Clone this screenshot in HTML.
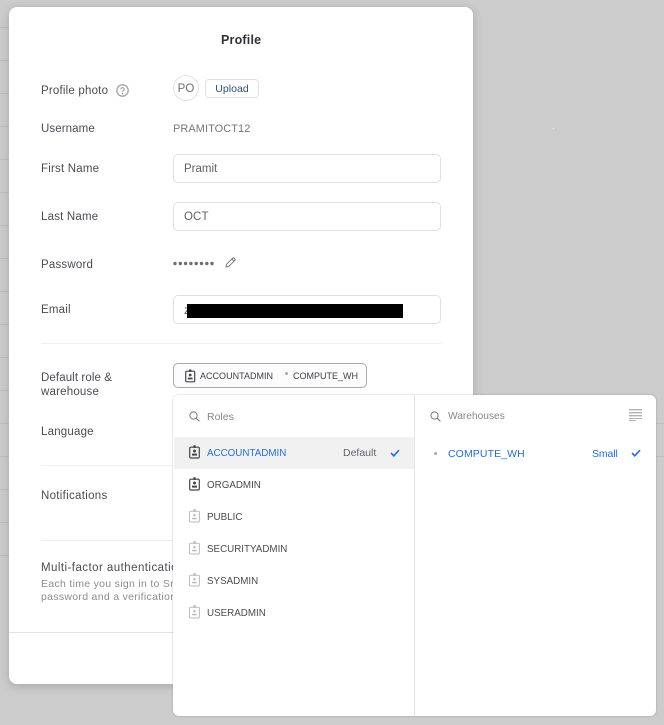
<!DOCTYPE html>
<html><head><meta charset="utf-8"><style>
html,body{margin:0;padding:0}
body{width:664px;height:725px;overflow:hidden;background:#cccccc;position:relative;font-family:"Liberation Sans",sans-serif;font-size:11.5px;color:#4a4c52}
.a{position:absolute;white-space:nowrap;line-height:14px;margin-top:1px}
.l{letter-spacing:.2px}
.ln{position:absolute;height:1px;background:#bdbdbd}
.modal{position:absolute;left:9px;top:7px;width:464px;height:677px;background:#fff;border-radius:8px;box-shadow:0 2px 10px rgba(0,0,0,.18)}
.input{position:absolute;left:173px;width:266px;height:27px;border:1px solid #dfe0e2;border-radius:5px;background:#fff}
.hr{position:absolute;height:1px;background:#efeff0}
.pop{position:absolute;left:173px;top:395px;width:483px;height:321px;background:#fff;border-radius:6px;box-shadow:0 0 2px rgba(0,0,0,.22)}
.r{font-size:9.8px;letter-spacing:0}
svg{position:absolute;display:block}
</style></head><body>
<div class="ln" style="left:0;top:27px;width:9px"></div><div class="ln" style="left:0;top:60px;width:9px"></div><div class="ln" style="left:0;top:93px;width:9px"></div><div class="ln" style="left:0;top:126px;width:9px"></div><div class="ln" style="left:0;top:159px;width:9px"></div><div class="ln" style="left:0;top:192px;width:9px"></div><div class="ln" style="left:0;top:225px;width:9px"></div><div class="ln" style="left:0;top:258px;width:9px"></div><div class="ln" style="left:0;top:291px;width:9px"></div><div class="ln" style="left:0;top:324px;width:9px"></div><div class="ln" style="left:0;top:357px;width:9px"></div><div class="ln" style="left:0;top:390px;width:9px"></div><div class="ln" style="left:0;top:423px;width:9px"></div><div class="ln" style="left:0;top:456px;width:9px"></div><div class="ln" style="left:0;top:489px;width:9px"></div><div class="ln" style="left:0;top:522px;width:9px"></div><div class="ln" style="left:0;top:555px;width:9px"></div>
<div class="ln" style="left:656px;top:423px;width:8px"></div><div class="ln" style="left:656px;top:456px;width:8px"></div>
<div style="position:absolute;left:553px;top:128px;width:1px;height:1px;background:#f4f4f4"></div>

<div class="modal"></div>
<div class="a" style="left:221px;top:32px;font-size:12.5px;font-weight:bold;color:#2f3136;letter-spacing:.2px">Profile</div>

<div class="a l" style="left:41px;top:83px">Profile photo</div>
<svg style="left:116px;top:84px" width="13" height="13" viewBox="0 0 13 13"><circle cx="6.5" cy="6.5" r="5.7" fill="none" stroke="#a3a4a7" stroke-width="1.3"/><path d="M4.8 5.2a1.7 1.6 0 1 1 2.6 1.4c-.6.4-.9.6-.9 1.2" fill="none" stroke="#a3a4a7" stroke-width="1.2"/><circle cx="6.5" cy="9.6" r=".8" fill="#a3a4a7"/></svg>
<div class="a" style="margin-top:0;left:173px;top:75px;width:24px;height:24px;border:1px solid #e3e3e5;border-radius:50%;line-height:26px;text-align:center;font-size:11.5px;color:#6c6e73;letter-spacing:.1px">PO</div>
<div class="a" style="margin-top:0;left:205px;top:79px;width:52px;height:17px;border:1px solid #dfe0e2;border-radius:4px;line-height:18px;text-align:center;font-size:10.5px;color:#2a4f80;letter-spacing:.05px">Upload</div>

<div class="a l" style="left:41px;top:121px;letter-spacing:.1px">Username</div>
<div class="a" style="left:173px;top:121px;color:#75777c;font-size:11px;letter-spacing:.05px">PRAMITOCT12</div>

<div class="a l" style="left:41px;top:161px">First Name</div>
<div class="input" style="top:154px"></div>
<div class="a" style="left:184px;top:161px;color:#5f6166;letter-spacing:0">Pramit</div>

<div class="a l" style="left:41px;top:209px">Last Name</div>
<div class="input" style="top:202px"></div>
<div class="a" style="left:184px;top:209px;color:#5f6166;letter-spacing:.1px">OCT</div>

<div class="a l" style="left:41px;top:257px">Password</div>
<svg style="left:173px;top:261px" width="41" height="5" viewBox="0 0 41 5" fill="#6c6e73"><circle cx="2" cy="2.5" r="1.7"/><circle cx="7.3" cy="2.5" r="1.7"/><circle cx="12.6" cy="2.5" r="1.7"/><circle cx="17.9" cy="2.5" r="1.7"/><circle cx="23.2" cy="2.5" r="1.7"/><circle cx="28.5" cy="2.5" r="1.7"/><circle cx="33.8" cy="2.5" r="1.7"/><circle cx="39" cy="2.5" r="1.7"/></svg>
<svg style="left:225px;top:257px" width="11" height="11" viewBox="0 0 11 11"><path d="M1 10l.6-2.8L7.6 1.2a1 1 0 0 1 1.4 0l.8.8a1 1 0 0 1 0 1.4L3.8 9.4z M6.8 2l2.2 2.2" fill="none" stroke="#6c6e73" stroke-width=".9"/></svg>

<div class="a l" style="left:41px;top:302px">Email</div>
<div class="input" style="top:295px"></div>
<div class="a" style="left:184px;top:303px;color:#5f6166">z</div>
<div style="position:absolute;left:187px;top:304px;width:216px;height:14px;background:#000"></div>

<div class="hr" style="left:41px;top:343px;width:400px"></div>

<div class="a l" style="left:41px;top:370px;letter-spacing:.1px">Default role &amp;</div>
<div class="a l" style="left:41px;top:384px">warehouse</div>
<div class="a" style="margin-top:0;left:173px;top:363px;width:192px;height:23px;border:1px solid #a9aaad;border-radius:5px;background:#fcfcfc"></div>
<svg style="left:185px;top:369px" width="11" height="14" viewBox="0 0 11 14"><rect x=".7" y="2.2" width="9" height="10.6" rx="1.2" fill="none" stroke="#44464b" stroke-width="1.2"/><rect x="4" y=".5" width="2.4" height="2.4" fill="#44464b"/><circle cx="5.2" cy="6" r="1.4" fill="#44464b"/><rect x="2.8" y="8.6" width="4.8" height="1.8" fill="#44464b"/></svg>
<div class="a" style="left:200px;top:368px;font-size:9px;color:#3e4045;letter-spacing:.02px">ACCOUNTADMIN</div>
<div style="position:absolute;left:285px;top:372px;width:3px;height:3px;border-radius:50%;background:#a8a9ac"></div>
<div class="a" style="left:293px;top:368px;font-size:9px;color:#3e4045;letter-spacing:0">COMPUTE_WH</div>

<div class="a l" style="left:41px;top:424px">Language</div>
<div class="hr" style="left:41px;top:465px;width:132px"></div>
<div class="a l" style="left:41px;top:488px;letter-spacing:.3px">Notifications</div>
<div class="hr" style="left:41px;top:540px;width:132px"></div>
<div class="a l" style="left:41px;top:560px;width:132px;overflow:hidden;letter-spacing:.45px">Multi-factor authentication</div>
<div class="a" style="left:41px;top:577px;width:132px;overflow:hidden;font-size:10.5px;line-height:13px;color:#8b8d92;letter-spacing:.3px">Each time you sign in to Snowflake<br>password and a verification code</div>
<div class="hr" style="left:9px;top:632px;width:164px;background:#e3e3e4"></div>

<div class="pop"></div>
<div style="position:absolute;left:414px;top:395px;width:1px;height:321px;background:#e4e4e5"></div>
<div style="position:absolute;left:174px;top:437px;width:240px;height:32px;background:#f1f1f2"></div>

<svg style="left:189px;top:411px" width="11" height="11" viewBox="0 0 11 11"><circle cx="4.5" cy="4.5" r="3.6" fill="none" stroke="#75777c" stroke-width="1"/><path d="M7.2 7.2l3.2 3.2" stroke="#75777c" stroke-width="1.1"/></svg>
<div class="a" style="left:207px;top:409px;font-size:10.5px;color:#85878c">Roles</div>

<svg style="left:189px;top:445px" width="11" height="14" viewBox="0 0 11 14"><rect x=".7" y="2.2" width="9.6" height="10.8" rx="1.2" fill="none" stroke="#44464b" stroke-width="1.2"/><rect x="4.3" y=".3" width="2.4" height="2.6" fill="#44464b"/><circle cx="5.5" cy="6" r="1.5" fill="#44464b"/><rect x="3" y="8.6" width="5" height="2" fill="#44464b"/></svg>
<div class="a r" style="left:207px;top:446px;color:#1f6fe0">ACCOUNTADMIN</div>
<div class="a" style="left:343px;top:445px;font-size:10.5px;color:#63656a;letter-spacing:0">Default</div>
<svg style="left:390px;top:449px" width="10" height="8" viewBox="0 0 10 8"><path d="M1 4l2.8 2.8L9 1.2" fill="none" stroke="#1f6fe0" stroke-width="1.6"/></svg>

<svg style="left:189px;top:477px" width="11" height="14" viewBox="0 0 11 14"><rect x=".7" y="2.2" width="9.6" height="10.8" rx="1.2" fill="none" stroke="#44464b" stroke-width="1.2"/><rect x="4.3" y=".3" width="2.4" height="2.6" fill="#44464b"/><circle cx="5.5" cy="6" r="1.5" fill="#44464b"/><rect x="3" y="8.6" width="5" height="2" fill="#44464b"/></svg>
<div class="a r" style="left:207px;top:478px;color:#4a4c52">ORGADMIN</div>

<svg style="left:189px;top:509px" width="11" height="14" viewBox="0 0 11 14"><rect x=".6" y="2.2" width="9.8" height="10.8" rx="1.2" fill="none" stroke="#b9babc" stroke-width="1"/><rect x="4.3" y=".3" width="2.4" height="2.6" fill="#b9babc"/><circle cx="5.5" cy="6.2" r="1.2" fill="#b9babc"/><rect x="3.2" y="8.8" width="4.6" height="1.5" fill="#b9babc"/></svg>
<div class="a r" style="left:207px;top:510px;color:#4a4c52">PUBLIC</div>
<svg style="left:189px;top:541px" width="11" height="14" viewBox="0 0 11 14"><rect x=".6" y="2.2" width="9.8" height="10.8" rx="1.2" fill="none" stroke="#b9babc" stroke-width="1"/><rect x="4.3" y=".3" width="2.4" height="2.6" fill="#b9babc"/><circle cx="5.5" cy="6.2" r="1.2" fill="#b9babc"/><rect x="3.2" y="8.8" width="4.6" height="1.5" fill="#b9babc"/></svg>
<div class="a r" style="left:207px;top:542px;color:#4a4c52">SECURITYADMIN</div>
<svg style="left:189px;top:573px" width="11" height="14" viewBox="0 0 11 14"><rect x=".6" y="2.2" width="9.8" height="10.8" rx="1.2" fill="none" stroke="#b9babc" stroke-width="1"/><rect x="4.3" y=".3" width="2.4" height="2.6" fill="#b9babc"/><circle cx="5.5" cy="6.2" r="1.2" fill="#b9babc"/><rect x="3.2" y="8.8" width="4.6" height="1.5" fill="#b9babc"/></svg>
<div class="a r" style="left:207px;top:574px;color:#4a4c52">SYSADMIN</div>
<svg style="left:189px;top:605px" width="11" height="14" viewBox="0 0 11 14"><rect x=".6" y="2.2" width="9.8" height="10.8" rx="1.2" fill="none" stroke="#b9babc" stroke-width="1"/><rect x="4.3" y=".3" width="2.4" height="2.6" fill="#b9babc"/><circle cx="5.5" cy="6.2" r="1.2" fill="#b9babc"/><rect x="3.2" y="8.8" width="4.6" height="1.5" fill="#b9babc"/></svg>
<div class="a r" style="left:207px;top:606px;color:#4a4c52">USERADMIN</div>

<svg style="left:430px;top:411px" width="11" height="11" viewBox="0 0 11 11"><circle cx="4.5" cy="4.5" r="3.6" fill="none" stroke="#75777c" stroke-width="1"/><path d="M7.2 7.2l3.2 3.2" stroke="#75777c" stroke-width="1.1"/></svg>
<div class="a" style="left:448px;top:409px;font-size:10.2px;color:#85878c">Warehouses</div>
<svg style="left:629px;top:409px" width="13" height="13" viewBox="0 0 13 13" fill="#b0b1b3"><rect y="0" width="13" height="1.4"/><rect y="3" width="13" height="1.4"/><rect y="6" width="13" height="1.4"/><rect y="9" width="13" height="1"/><rect y="11" width="7" height="1"/></svg>

<div style="position:absolute;left:434px;top:452px;width:3px;height:3px;border-radius:50%;background:#a8a9ac"></div>
<div class="a" style="left:448px;top:446px;font-size:10.5px;color:#1f6fe0;letter-spacing:.1px">COMPUTE_WH</div>
<div class="a" style="left:592px;top:446px;font-size:10.5px;color:#1f6fe0;letter-spacing:-.1px">Small</div>
<svg style="left:631px;top:449px" width="10" height="8" viewBox="0 0 10 8"><path d="M1 4l2.8 2.8L9 1.2" fill="none" stroke="#1f6fe0" stroke-width="1.6"/></svg>
</body></html>
